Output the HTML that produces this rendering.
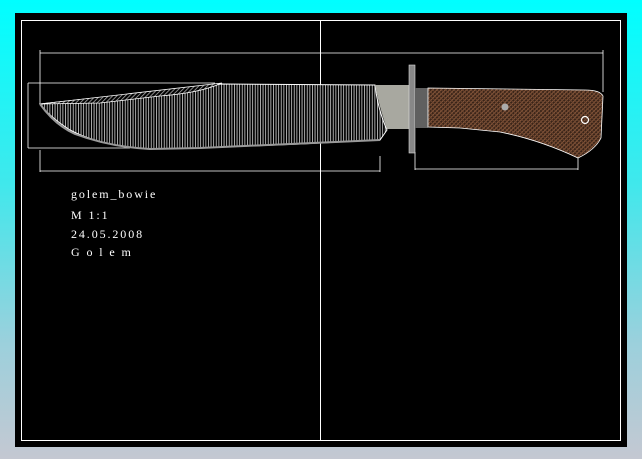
<!DOCTYPE html>
<html><head><style>
html,body{margin:0;padding:0;width:642px;height:459px;overflow:hidden;background:linear-gradient(#00ffff 0%,#40e8ec 40%,#9cd0dc 75%,#c4c8d2 100%);}
svg{position:absolute;left:0;top:0}
text{font-family:"Liberation Serif",serif;fill:#fff;font-size:12px;letter-spacing:1.9px}
</style></head><body>
<svg width="642" height="459" viewBox="0 0 642 459">
<defs>
<pattern id="vl" width="2.6" height="10" patternUnits="userSpaceOnUse"><rect width="2.6" height="10" fill="#000"/><rect width="0.9" height="10" fill="#bbb"/></pattern>
<pattern id="dg" width="3" height="3" patternUnits="userSpaceOnUse" patternTransform="rotate(45)"><rect width="3" height="3" fill="#000"/><rect width="0.8" height="3" fill="#aaa"/></pattern>
<pattern id="xh" width="3" height="3" patternUnits="userSpaceOnUse" patternTransform="rotate(45)"><rect width="3" height="3" fill="#3a2418"/><rect width="1" height="3" fill="#8a5a3c"/><rect width="3" height="1" fill="#6e4630"/></pattern>
</defs>
<rect x="15" y="13" width="612" height="434" fill="#000"/>
<rect x="21.5" y="20.5" width="599" height="420" fill="none" stroke="#fff" stroke-width="1"/>
<line x1="320.5" y1="20" x2="320.5" y2="441" stroke="#fff"/>
<g stroke="#fff" stroke-width="0.8" fill="none">
<line x1="40" y1="53" x2="603" y2="53"/>
<line x1="40" y1="50" x2="40" y2="104"/>
<line x1="603" y1="50" x2="603" y2="92"/>
<line x1="28" y1="83" x2="215" y2="83"/>
<line x1="28" y1="148" x2="130" y2="148"/>
<line x1="28" y1="83" x2="28" y2="148"/>
<line x1="40" y1="171" x2="380" y2="171"/>
<line x1="40" y1="150" x2="40" y2="172"/>
<line x1="380" y1="156" x2="380" y2="172"/>
<line x1="415" y1="169" x2="578" y2="169"/>
<line x1="415" y1="152" x2="415" y2="170"/>
<line x1="578" y1="158" x2="578" y2="170"/>
</g>
<path d="M40,104 L222,84 L375,85 Q378,110 387,130 L380,140 L300,144 L200,148 L150,149 Q100,146 70,130 Q50,117 40,104 Z" fill="url(#vl)" stroke="#fff" stroke-width="1"/>
<path d="M40,104 L222,83 Q200,93 160,96 L100,103 Z" fill="url(#dg)" stroke="#fff" stroke-width="0.8"/>
<path d="M40,104 Q55,125 75,134 Q110,147 150,149 L200,148 L380,140" fill="none" stroke="#999" stroke-width="2"/>
<path d="M375,85 L409,85 L409,129 L387,129 Q380,110 375,85 Z" fill="#a8a8a0"/>
<rect x="409" y="65" width="6" height="88" fill="#888" stroke="#ddd" stroke-width="0.6"/>
<rect x="415" y="88" width="13" height="40" fill="#606060"/>
<path d="M428,88 L585,90 Q600,90 603,96 L601,138 Q595,150 578,158 Q540,140 500,132 L460,128 L428,127 Z" fill="url(#xh)" stroke="#fff" stroke-width="0.8"/>
<circle cx="505" cy="107" r="3.5" fill="#aaa"/>
<circle cx="585" cy="120" r="3.5" fill="none" stroke="#fff" stroke-width="1.2"/>
<text x="71" y="198">golem_bowie</text>
<text x="71" y="219">M  1:1</text>
<text x="71" y="238">24.05.2008</text>
<text x="71" y="256">G o l e m</text>
</svg>
</body></html>
